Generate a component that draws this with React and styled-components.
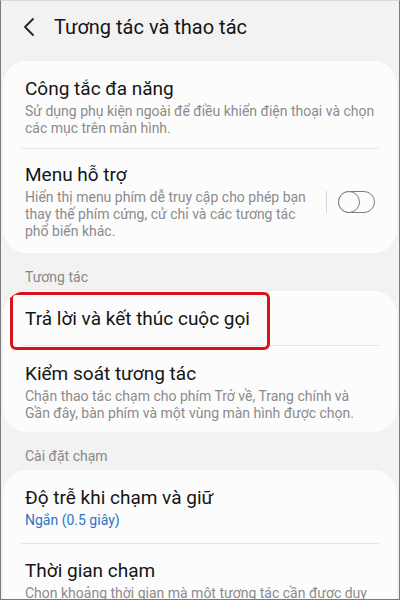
import React from 'react'
import styled, { createGlobalStyle } from 'styled-components'

const GlobalStyle = createGlobalStyle`
	html, body {
		margin: 0;
		padding: 0;
		background: #f2f2f2;
	}
	* {
		box-sizing: border-box;
	}
`

const Screen = styled.div`
	width: 400px;
	height: 600px;
	overflow: hidden;
	background: #f2f2f2;
	border: 1px solid #7a7a7a;
	border-top-color: #d8d8d8;
	font-family: Roboto, 'Noto Sans', sans-serif;
	color: #111;
`

const Header = styled.div`
	display: flex;
	align-items: center;
	height: 52px;
	padding: 0 0 0 22px;
	gap: 17px;
`

const BackButton = styled.div`
	display: flex;
	align-items: center;
	width: 14px;
	height: 20px;
`

const Title = styled.h1`
	margin: 0;
	font-size: 20px;
	font-weight: 400;
	color: #151515;
`

const Card = styled.div`
	margin: ${props => props.top || 0}px 2px 0;
	background: #fcfcfc;
	border-radius: 24px;
	overflow: hidden;
`

const Item = styled.div`
	position: relative;
	display: flex;
	align-items: center;
	padding: ${props => props.pad || '14px 22px 12px 22px'};
	${props => props.divider && `
		&::after {
			content: '';
			position: absolute;
			left: 18px;
			right: 18px;
			bottom: 0;
			height: 1px;
			background: #e4e4e4;
		}
	`}
`

const Texts = styled.div`
	flex: 1;
	min-width: 0;
`

const ItemTitle = styled.div`
	font-size: 19px;
	line-height: 24px;
	color: #151515;
`

const Sub = styled.div`
	margin-top: 2px;
	font-size: 14px;
	line-height: 17px;
	color: ${props => (props.blue ? '#2a74c7' : '#8b8b8b')};
`

const SectionLabel = styled.div`
	padding: 16px 24px 5px;
	font-size: 14px;
	line-height: 17px;
	color: #888;
`

const SwitchArea = styled.div`
	display: flex;
	align-items: center;
	gap: 11px;
	margin-left: 10px;
	align-self: flex-start;
	margin-top: 28px;
`

const Separator = styled.div`
	width: 1px;
	height: 22px;
	background: #d6d6d6;
`

const Toggle = styled.div`
	position: relative;
	width: 37px;
	height: 22px;
	border: 1.5px solid #7d7d7d;
	border-radius: 11px;

	&::before {
		content: '';
		position: absolute;
		left: -1.5px;
		top: -1.5px;
		width: 22px;
		height: 22px;
		box-sizing: border-box;
		border: 1.5px solid #7d7d7d;
		border-radius: 50%;
		background: #fcfcfc;
	}
`

// red frame drawn over the call-answering row
const Highlight = styled.div`
	position: absolute;
	z-index: 1;
	left: 7px;
	top: 1px;
	width: 260px;
	height: 58px;
	border: 3px solid #dc1218;
	border-radius: 6px;
	pointer-events: none;
`

const ChevronLeft = () => (
	<svg width="12" height="20" viewBox="0 0 12 20">
		<path d="M10 2 L2 10 L10 18" fill="none" stroke="#222" strokeWidth="1.8" strokeLinecap="round" strokeLinejoin="round" />
	</svg>
)

export default function App() {
	return (
		<Screen>
			<GlobalStyle />
			<Header>
				<BackButton>
					<ChevronLeft />
				</BackButton>
				<Title>Tương tác và thao tác</Title>
			</Header>

			<Card top={8}>
				<Item divider pad="16px 22px 12px 22px">
					<Texts>
						<ItemTitle>Công tắc đa năng</ItemTitle>
						<Sub>Sử dụng phụ kiện ngoài để điều khiển điện thoại và chọn các mục trên màn hình.</Sub>
					</Texts>
				</Item>
				<Item pad="14px 22px 13px 22px">
					<Texts>
						<ItemTitle>Menu hỗ trợ</ItemTitle>
						<Sub>Hiển thị menu phím dễ truy cập cho phép bạn thay thế phím cứng, cử chỉ và các tương tác phổ biến khác.</Sub>
					</Texts>
					<SwitchArea>
						<Separator />
						<Toggle />
					</SwitchArea>
				</Item>
			</Card>

			<SectionLabel>Tương tác</SectionLabel>
			<Card>
				<Item divider pad="16px 22px 15px 22px">
					<Highlight />
					<Texts>
						<ItemTitle>Trả lời và kết thúc cuộc gọi</ItemTitle>
					</Texts>
				</Item>
				<Item pad="16px 22px 10px 22px">
					<Texts>
						<ItemTitle>Kiểm soát tương tác</ItemTitle>
						<Sub>Chặn thao tác chạm cho phím Trở về, Trang chính và Gần đây, bàn phím và một vùng màn hình được chọn.</Sub>
					</Texts>
				</Item>
			</Card>

			<SectionLabel>Cài đặt chạm</SectionLabel>
			<Card>
				<Item divider pad="16px 22px 15px 22px">
					<Texts>
						<ItemTitle>Độ trễ khi chạm và giữ</ItemTitle>
						<Sub blue>Ngắn (0.5 giây)</Sub>
					</Texts>
				</Item>
				<Item pad="15px 22px 12px 22px">
					<Texts>
						<ItemTitle>Thời gian chạm</ItemTitle>
						<Sub>Chọn khoảng thời gian mà một tương tác cần được duy trì trước khi được nhận diện.</Sub>
					</Texts>
				</Item>
			</Card>
		</Screen>
	)
}
